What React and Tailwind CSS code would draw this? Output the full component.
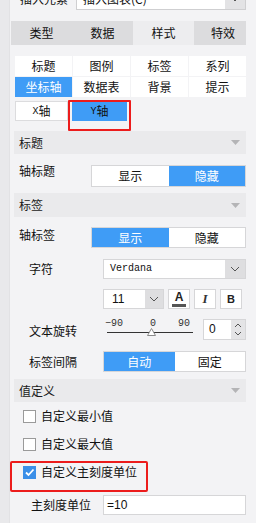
import React from "react";

const font = { fontFamily: '"Noto Sans CJK SC", "Noto Sans", sans-serif' };

function Chevron({ className = "" }) {
  return (
    <svg width="10" height="6" viewBox="0 0 10 6" className={className}>
      <path d="M1 1 L5 5 L9 1" fill="none" stroke="#555" strokeWidth="1" />
    </svg>
  );
}

function HeaderBar({ title, h = "h-[23px]" }) {
  return (
    <div className={`ml-[4px] w-[232px] ${h} bg-[#eaeaec] flex items-center justify-between pl-[5px] pr-[6px]`}>
      <span className="text-[12px] leading-[16px] text-[#1a1a1a]">{title}</span>
      <svg width="9" height="5" viewBox="0 0 9 5">
        <path d="M0 0 L9 0 L4.5 5 Z" fill="#b4b4b6" />
      </svg>
    </div>
  );
}

function Toggle({ left, right, active, width }) {
  return (
    <div className={`flex border border-[#d6d6d8] bg-white ${width}`}>
      <div className={`flex-1 flex items-center justify-center text-[12px] ${active === 0 ? "bg-[#3f9cf6] text-white" : "text-[#111]"}`}>{left}</div>
      <div className={`flex-1 flex items-center justify-center text-[12px] ${active === 1 ? "bg-[#3f9cf6] text-white" : "text-[#111]"}`}>{right}</div>
    </div>
  );
}

function CheckRow({ label, checked }) {
  return (
    <div className="h-[28px] flex items-center pl-[13px]">
      {checked ? (
        <div className="w-[13px] h-[13px] bg-[#3b8fe8] flex items-center justify-center">
          <svg width="11" height="11" viewBox="0 0 11 11">
            <path d="M2 5.5 L4.5 8 L9.5 2.5" fill="none" stroke="white" strokeWidth="1.8" />
          </svg>
        </div>
      ) : (
        <div className="w-[13px] h-[13px] border border-[#9a9a9a] bg-white" />
      )}
      <span className="ml-[5px] text-[12px] leading-[16px] text-[#111]">{label}</span>
    </div>
  );
}

const mono = { fontFamily: '"Liberation Mono", monospace' };
const sans = { fontFamily: '"Liberation Sans", sans-serif' };

export default function App() {
  return (
    <div className="w-[256px] h-[523px] overflow-hidden flex bg-[#f3f3f5]" style={font}>
      <div className="w-[10px] h-full bg-[#e9e9eb] border-r border-[#e2e2e4]" />
      <div className="w-[246px] flex flex-col text-[#111]">
        {/* top row */}
        <div className="h-[22px] -mt-[12px] flex items-center">
          <span className="ml-[10px] text-[12px] w-[56px]">插入元素</span>
          <div className="w-[170px] h-[22px] flex border border-[#cfcfd1] bg-white">
            <span className="flex-1 pl-[6px] text-[12px] leading-[20px]">插入图表(C)</span>
            <div className="w-[20px] bg-[#e3e3e5] flex items-center justify-center">
              <Chevron />
            </div>
          </div>
        </div>

        {/* main tabs */}
        <div className="mt-[11px] ml-[1px] w-[235px] h-[24px] flex text-[12px]">
          <div className="w-[61px] bg-[#dcdcde] flex items-center justify-center">类型</div>
          <div className="w-[61px] bg-[#dcdcde] flex items-center justify-center">数据</div>
          <div className="w-[61px] bg-[#ededef] flex items-center justify-center">样式</div>
          <div className="w-[52px] bg-[#dcdcde] flex items-center justify-center pl-[6px]">特效</div>
        </div>

        {/* sub tabs */}
        <div className="mt-[11px] ml-[5px] w-[231px] grid grid-cols-4 gap-[1px] text-[12px]">
          {["标题", "图例", "标签", "系列", "坐标轴", "数据表", "背景", "提示"].map((t) => (
            <div
              key={t}
              className={`h-[20px] flex items-center justify-center ${t === "坐标轴" ? "bg-[#3f9cf6] text-white" : "bg-white"}`}
            >
              {t}
            </div>
          ))}
        </div>

        {/* X/Y axis */}
        <div className="relative mt-[4px] ml-[5px] h-[20px] flex text-[12px]">
          <div className="w-[53px] bg-white border border-[#dcdcde] flex items-center justify-center">
            <span style={mono} className="text-[10px]">X</span>轴
          </div>
          <div className="ml-[4px] w-[55px] bg-[#3f9cf6] flex items-center justify-center text-[#111]">
            <span style={mono} className="text-[10px]">Y</span>轴
          </div>
          <div className="absolute left-[53px] top-[-1px] w-[63px] h-[31px] border-2 border-[#ec1c1c] rounded-[1px]" />
        </div>

        {/* 标题 section */}
        <div className="mt-[10px]">
          <HeaderBar title="标题" />
        </div>
        <div className="mt-[11px] flex items-start">
          <span className="ml-[9px] -mt-[2px] w-[72px] text-[12px] leading-[16px]">轴标题</span>
          <Toggle left="显示" right="隐藏" active={1} width="w-[155px] h-[22px]" />
        </div>

        {/* 标签 section */}
        <div className="mt-[6px]">
          <HeaderBar title="标签" h="h-[24px]" />
        </div>
        <div className="mt-[10px] flex items-start">
          <span className="ml-[9px] w-[72px] text-[12px] leading-[16px]">轴标签</span>
          <Toggle left="显示" right="隐藏" active={0} width="w-[155px] h-[21px]" />
        </div>

        {/* 字符 */}
        <div className="mt-[11px] flex items-center">
          <span className="ml-[19px] w-[74px] text-[12px] leading-[16px]">字符</span>
          <div className="w-[143px] h-[20px] flex border border-[#d6d6d8] bg-white">
            <span className="flex-1 pl-[6px] text-[10px] leading-[18px]" style={mono}>
              Verdana
            </span>
            <div className="w-[20px] bg-[#dedee0] flex items-center justify-center">
              <Chevron />
            </div>
          </div>
        </div>

        {/* size row */}
        <div className="mt-[10px] ml-[93px] flex items-center h-[20px]">
          <div className="w-[61px] h-[20px] flex border border-[#d6d6d8] bg-white">
            <span className="flex-1 pl-[8px] text-[12px] leading-[18px]" style={sans}>11</span>
            <div className="w-[18px] bg-[#dedee0] flex items-center justify-center">
              <Chevron />
            </div>
          </div>
          <div className="ml-[4px] w-[22px] h-[20px] bg-white border border-[#d6d6d8] flex flex-col items-center justify-center">
            <span className="text-[12px] leading-[11px] font-bold text-[#222]" style={sans}>A</span>
            <div className="w-[14px] h-[3px] bg-[#555] mt-[1px]" />
          </div>
          <div className="ml-[4px] w-[22px] h-[20px] bg-white border border-[#d6d6d8] flex items-center justify-center">
            <span className="text-[13px] italic font-bold text-[#333]" style={{ fontFamily: '"Liberation Serif", serif' }}>I</span>
          </div>
          <div className="ml-[4px] w-[22px] h-[20px] bg-white border border-[#d6d6d8] flex items-center justify-center">
            <span className="text-[11px] font-bold text-[#222]" style={sans}>B</span>
          </div>
        </div>

        {/* 文本旋转 */}
        <div className="mt-[10px] flex items-center h-[21px]">
          <span className="ml-[19px] w-[76px] text-[12px] leading-[16px] mt-[2px]">文本旋转</span>
          <div className="relative w-[96px] h-[21px] text-[10px] leading-[10px] text-[#333]" style={mono}>
            <span className="absolute left-0 top-0">−90</span>
            <span className="absolute left-[45px] top-0">0</span>
            <span className="absolute left-[73px] top-0">90</span>
            <div className="absolute left-[2px] top-[13px] w-[86px] h-[1px] bg-[#333]" />
            <svg className="absolute left-[42px] top-[9px]" width="9" height="8" viewBox="0 0 9 8">
              <path d="M4.5 0.5 L8.5 7.5 L0.5 7.5 Z" fill="white" stroke="#8a8a8a" strokeWidth="1" />
            </svg>
          </div>
          <div className="ml-[2px] w-[43px] h-[21px] flex border border-[#d6d6d8] bg-white">
            <span className="flex-1 pl-[5px] text-[12px] leading-[19px]" style={sans}>0</span>
            <div className="w-[14px] bg-[#e4e4e6] flex flex-col items-center justify-center gap-[3px]">
              <svg width="8" height="5" viewBox="0 0 8 5"><path d="M1 4 L4 1 L7 4" fill="none" stroke="#555" strokeWidth="1" /></svg>
              <svg width="8" height="5" viewBox="0 0 8 5"><path d="M1 1 L4 4 L7 1" fill="none" stroke="#555" strokeWidth="1" /></svg>
            </div>
          </div>
        </div>

        {/* 标签间隔 */}
        <div className="mt-[11px] flex items-center">
          <span className="ml-[19px] w-[74px] text-[12px] leading-[16px]">标签间隔</span>
          <Toggle left="自动" right="固定" active={0} width="w-[143px] h-[21px]" />
        </div>

        {/* 值定义 */}
        <div className="mt-[7px]">
          <HeaderBar title="值定义" />
        </div>
        <CheckRow label="自定义最小值" />
        <CheckRow label="自定义最大值" />
        <div className="relative">
          <CheckRow label="自定义主刻度单位" checked />
          <div className="absolute left-0 top-[3px] w-[138px] h-[31px] border-2 border-[#ec1c1c] rounded-[2px]" />
        </div>

        {/* 主刻度单位 */}
        <div className="mt-[9px] flex items-center">
          <span className="ml-[21px] w-[72px] text-[12px] leading-[16px]">主刻度单位</span>
          <div className="w-[143px] h-[20px] border border-[#d6d6d8] bg-white pl-[3px] text-[12px] leading-[18px]" style={sans}>
            =10
          </div>
        </div>
      </div>
    </div>
  );
}
